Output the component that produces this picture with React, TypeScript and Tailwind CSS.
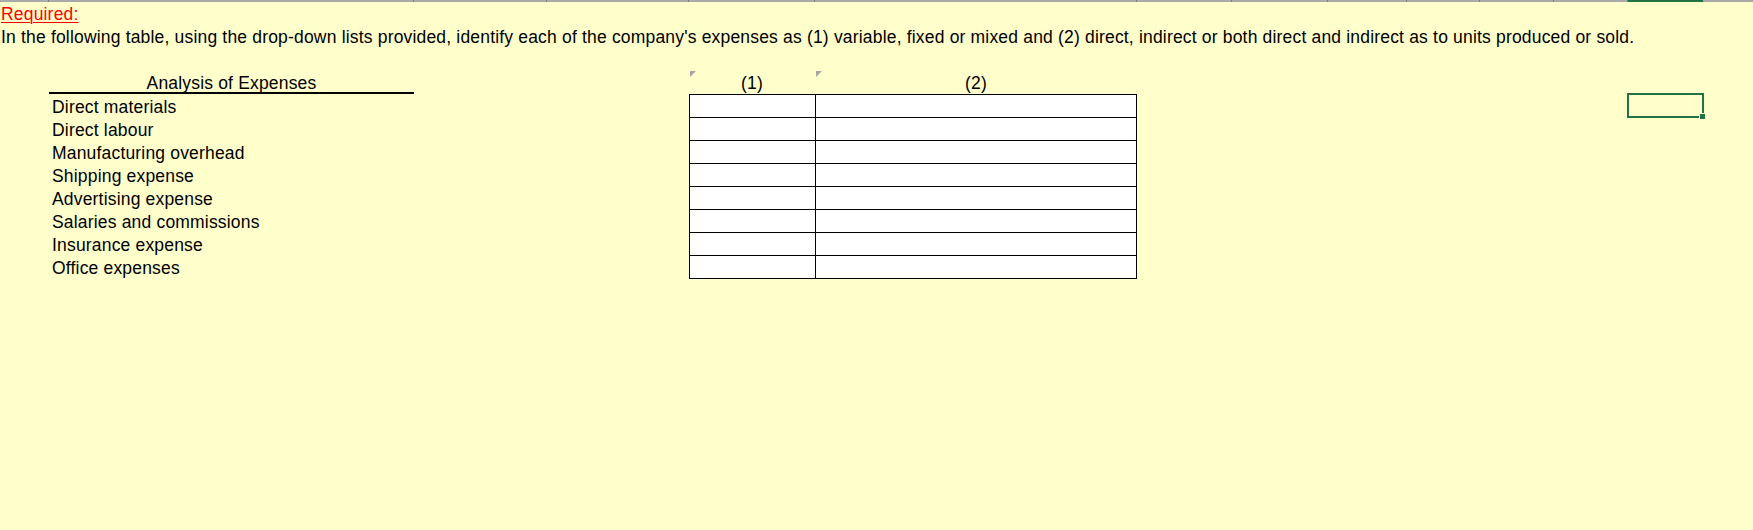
import React from "react";

const segs = [49, 365, 133, 142, 126, 322, 95, 96, 79, 73, 74, 74, 75, 50];
const labels = [
  "Direct materials",
  "Direct labour",
  "Manufacturing overhead",
  "Shipping expense",
  "Advertising expense",
  "Salaries and commissions",
  "Insurance expense",
  "Office expenses",
];

function Tri() {
  return (
    <svg width="6" height="6" viewBox="0 0 6 6" className="absolute left-[1px] top-0">
      <polygon points="0,0 6,0 0,6" fill="#a6a6a6" />
    </svg>
  );
}

export default function App() {
  return (
    <div
      className="w-[1753px] h-[530px] bg-[#ffffcc] text-black text-[17.5px] tracking-[0.18px] overflow-hidden"
      style={{ fontFamily: '"Liberation Sans", Arial, sans-serif' }}
    >
      {/* column header strip */}
      <div className="flex h-[2px]">
        {segs.map((w, i) => (
          <div
            key={i}
            style={{ width: w }}
            className={
              i === 12
                ? "h-[2px] bg-[#217346] shrink-0"
                : i === segs.length - 1
                ? "h-[2px] bg-[#a9a9a9] grow"
                : "h-[2px] bg-[#a9a9a9] border-r border-[#7f7f7f] shrink-0"
            }
          />
        ))}
      </div>

      <div className="h-[23px] leading-[25px] pl-[1px] whitespace-nowrap">
        <span className="text-[#ff0000] underline decoration-[1px] underline-offset-[2px]">Required:</span>
      </div>
      <div className="h-[23px] leading-[25px] pl-[1px] whitespace-nowrap">
        In the following table, using the drop-down lists provided, identify each of the company's expenses as (1)
        variable, fixed or mixed and (2) direct, indirect or both direct and indirect as to units produced or sold.
      </div>
      <div className="h-[23px]" />

      <div className="grid grid-cols-[49px_365px_275px_126px_322px_491px_75px_1fr]">
        {/* header row */}
        <div className="h-[23px]" />
        <div className="h-[23px] leading-[24px] text-center border-b-2 border-black whitespace-nowrap">
          Analysis of Expenses
        </div>
        <div />
        <div className="relative h-[23px] leading-[24px] text-center">
          <Tri />
          (1)
        </div>
        <div className="relative h-[23px] leading-[24px] text-center">
          <Tri />
          (2)
        </div>
        <div />
        <div />
        <div />

        {labels.map((l, i) => {
          const last = i === labels.length - 1;
          return (
            <React.Fragment key={l}>
              <div />
              <div className="h-[23px] leading-[26px] pl-[3px] whitespace-nowrap">{l}</div>
              <div />
              <div
                className={
                  "bg-white border-l border-t border-black " + (last ? "h-[24px] border-b" : "h-[23px]")
                }
              />
              <div
                className={
                  "bg-white border-l border-t border-r border-black " +
                  (last ? "h-[24px] border-b" : "h-[23px]")
                }
              />
              <div />
              <div className="relative h-[23px]">
                {i === 0 && (
                  <div className="absolute -left-[1px] -top-[1px] w-[77px] h-[25px] border-2 border-[#217346]">
                    <div className="absolute -right-[4px] -bottom-[4px] w-[7px] h-[7px] bg-[#217346] border border-[#ffffcc]" />
                  </div>
                )}
              </div>
              <div />
            </React.Fragment>
          );
        })}
      </div>
    </div>
  );
}
